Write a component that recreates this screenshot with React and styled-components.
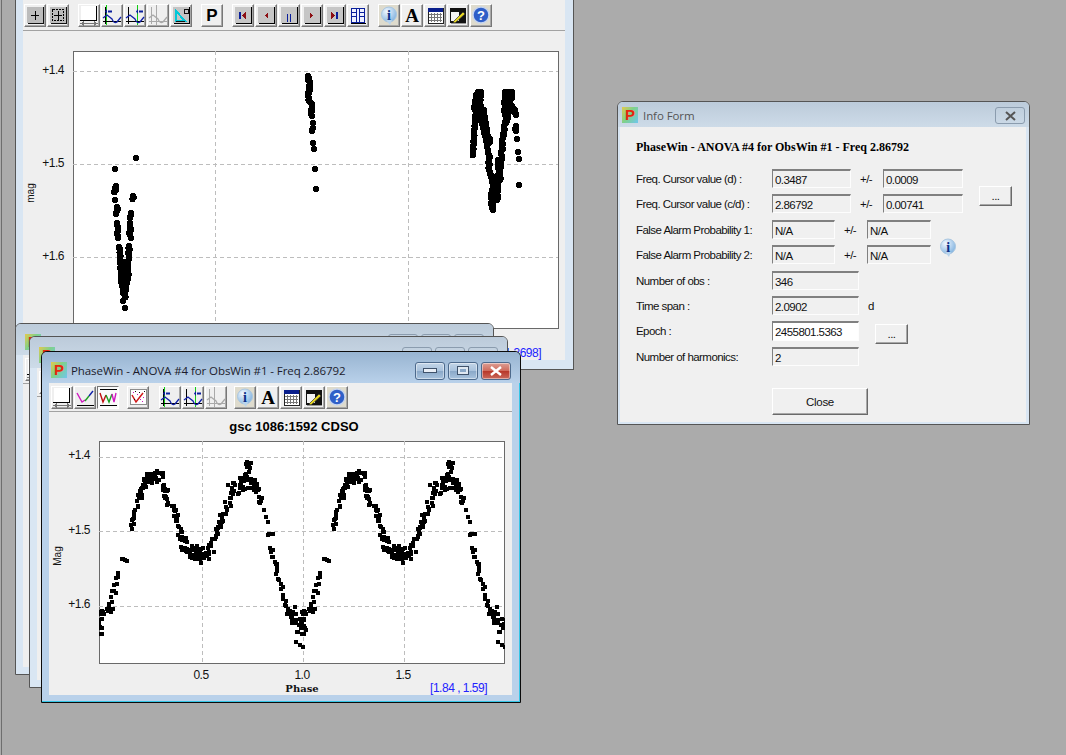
import React from "react";
import styled, { createGlobalStyle } from "styled-components";

const GlobalStyle = createGlobalStyle`
  html, body { margin: 0; padding: 0; background: #ababab; }
  * { box-sizing: border-box; }
`;

const Desktop = styled.div`
  position: relative;
  width: 1066px;
  height: 755px;
  overflow: hidden;
  background: #ababab;
  font-family: "Liberation Sans", Arial, sans-serif;

  &::before {
    content: "";
    position: absolute;
    left: 1px;
    top: 0;
    bottom: 0;
    width: 1px;
    background: #6e6e6e;
  }
`;

const Win = styled.div`
  position: absolute;
  left: ${({ $x }) => $x}px;
  top: ${({ $y }) => $y}px;
  width: ${({ $w }) => $w}px;
  height: ${({ $h }) => $h}px;
  display: flex;
  flex-direction: column;
  border: 1px solid ${({ $active }) => ($active ? "#0b0b0b" : "#555")};
  border-radius: ${({ $flat }) => ($flat ? "0" : "6px 6px 0 0")};
  background: ${({ $active }) => ($active ? "#b9d1ea" : "#d9e6f3")};
  box-shadow: ${({ $active }) => ($active ? "inset -1px -1px 0 #36c6e6" : "none")};
  padding: 0 ${({ $pr }) => $pr ?? 8}px ${({ $pb }) => $pb ?? 7}px ${({ $pl }) => $pl ?? 7}px;
`;

const TitleBar = styled.div`
  flex: none;
  height: ${({ $h }) => $h ?? 31}px;
  margin: 0 -${({ $mr }) => $mr ?? 8}px 0 -${({ $ml }) => $ml ?? 7}px;
  padding: ${({ $pt }) => $pt ?? 10}px ${({ $pr }) => $pr ?? 9}px 0 ${({ $pl }) => $pl ?? 9}px;
  display: flex;
  align-items: flex-start;
  border-radius: 5px 5px 0 0;
  background: ${({ $active }) =>
    $active
      ? "linear-gradient(#98b4d1, #b9d1ea)"
      : "linear-gradient(#bccbda, #cddbe8)"};
`;

const AppIcon = styled.div`
  flex: none;
  width: 16px;
  height: 16px;
  background: linear-gradient(125deg, #e4c94c 0%, #7fd18a 45%, #6fc6ee 100%);
  color: #e8260e;
  font: bold 15px/16px "Liberation Sans", sans-serif;
  text-align: center;
`;

const WinTitle = styled.div`
  margin-left: ${({ $ml }) => $ml ?? 4}px;
  font: 11.5px/17px "Open Sans", sans-serif;
  letter-spacing: -0.08px;
  color: ${({ $color }) => $color ?? "#1c1c2c"};
  white-space: nowrap;
`;

const Captions = styled.div`
  margin-left: auto;
  display: flex;
  gap: 3px;
`;

const CaptionBtn = styled.div`
  width: 30px;
  height: ${({ $h }) => $h ?? 18}px;
  display: flex;
  align-items: center;
  justify-content: center;
  border-radius: 3px;
  border: 1px solid ${({ $active }) => ($active ? "#4d6a8c" : "#8b9cae")};
  background: ${({ $kind, $active }) =>
    !$active
      ? "transparent"
      : $kind === "close"
      ? "linear-gradient(#dc9f95 0%, #cf6b5c 48%, #b8382a 52%, #c96a5c 100%)"
      : "linear-gradient(#c3d5e8 0%, #a9c2dc 48%, #8aa8c8 52%, #a9c3de 100%)"};
  box-shadow: ${({ $active }) => ($active ? "inset 0 0 0 1px rgba(255,255,255,.45)" : "none")};
`;

const Client = styled.div`
  flex: 1;
  min-height: 0;
  display: flex;
  flex-direction: column;
  background: #efefef;
  overflow: hidden;
`;

const Toolbar = styled.div`
  flex: none;
  height: ${({ $h }) => $h}px;
  padding: ${({ $pt }) => $pt}px 0 0 ${({ $pl }) => $pl}px;
  display: flex;
  border-bottom: 1px solid #a2a2a2;
`;

const ToolGroup = styled.div`
  display: flex;
  gap: 1px;
  margin-left: ${({ $ml }) => $ml ?? 9}px;

  &:first-child {
    margin-left: 0;
  }
`;

const ToolBtn = styled.div`
  width: 22px;
  height: 23px;
  border: 1px solid;
  border-color: ${({ $down }) =>
    $down ? "#777 #fff #fff #777" : "#fff #777 #777 #fff"};
  background: ${({ $tint, $down }) => ($tint ? "#dedbcd" : $down ? "#fafafa" : "#efefef")};
  box-shadow: ${({ $down }) => ($down ? "none" : "inset -1px -1px 0 #a8a8a8")};

  svg {
    display: block;
  }
`;

const PBtnText = styled.div`
  font: bold 17px/21px "Liberation Sans", sans-serif;
  text-align: center;
  color: #000;
`;

const Chart = styled.svg`
  display: block;
  flex: none;
`;

const TickText = styled.text`
  font: 12px "Liberation Sans", sans-serif;
  letter-spacing: -0.5px;
  fill: #111;
`;

const AxisName = styled.text`
  font: 10px "Liberation Sans", sans-serif;
  fill: #111;
`;

const SerifAxis = styled.text`
  font: bold 10px "DejaVu Serif", serif;
  fill: #111;
`;

const PlotTitle = styled.text`
  font: bold 13px "Liberation Sans", sans-serif;
  fill: #000;
`;

const CursorText = styled.text`
  font: 12px "Liberation Sans", sans-serif;
  letter-spacing: -0.5px;
  fill: #2222ff;
`;

/* Info form */
const InfoFrame = styled(Client)`
  background: #f0f0f0;
  padding: 13px 0 0 16px;
  color: #111;
  font-size: 11.5px;
  letter-spacing: -0.55px;
`;

const FormHeading = styled.div`
  height: 15px;
  font: bold 12px/15px "Liberation Serif", serif;
  letter-spacing: 0;
  color: #000;
  white-space: nowrap;
  margin-bottom: 14px;
`;

const Block = styled.div`
  display: flex;
  align-items: flex-start;
`;

const Rows = styled.div`
  display: grid;
  grid-auto-rows: 25.4px;
`;

const Row = styled.div`
  display: flex;
  align-items: flex-start;
`;

const Label = styled.div`
  flex: none;
  width: 136px;
  padding-top: 1px;
  line-height: 19px;
  white-space: nowrap;
`;

const Field = styled.div`
  flex: none;
  width: ${({ $w }) => $w}px;
  height: ${({ $tall }) => ($tall ? 20 : 19)}px;
  padding-left: 2px;
  line-height: 18px;
  border-style: solid;
  border-width: 2px 1px 1px 1px;
  border-color: #808080 #fdfdfd #fdfdfd #808080;
  background: ${({ $edit }) => ($edit ? "#fff" : "#f0f0f0")};
`;

const PlusMinus = styled.div`
  flex: none;
  width: 32px;
  padding: 1px 0 0 9px;
  line-height: 19px;
`;

const Unit = styled.div`
  margin-left: 9px;
  line-height: 21px;
`;

const Bevel = styled.div`
  flex: none;
  display: flex;
  align-items: center;
  justify-content: center;
  border: 1px solid;
  border-color: #fff #6a6a6a #6a6a6a #fff;
  box-shadow: inset -1px -1px 0 #a8a8a8;
  background: #f0f0f0;
`;

const DotsBtn = styled(Bevel)`
  width: 33px;
  height: 20px;
  margin-top: ${({ $mt }) => $mt}px;
  margin-left: ${({ $ml }) => $ml}px;
`;

const SideIcon = styled.div`
  flex: none;
  margin-top: 17px;
  margin-left: 7px;
`;

const CloseBtn = styled(Bevel)`
  width: 96px;
  height: 27px;
  margin: 16px 0 0 136px;
  letter-spacing: -0.3px;
`;

const Ink = { blue: "#0a1f9c", red: "#8c0f14", black: "#000", gray: "#a9a9a9" };

const PlusIcon = () => (
  <svg width="20" height="21" shapeRendering="crispEdges">
    <rect x="2" y="2" width="16" height="16" fill="#bcbcbc" />
    <path d="M2.5 18.5H18.5V2" stroke="#111" fill="none" />
    <path d="M6 10.5H14M10.5 6V15" stroke="#000" />
  </svg>
);

const GridIcon = () => (
  <svg width="20" height="21" shapeRendering="crispEdges">
    <rect x="2" y="2" width="16" height="16" fill="#bcbcbc" />
    <path d="M2.5 18.5H18.5V2" stroke="#111" fill="none" />
    <rect x="4.5" y="4.5" width="11" height="11" fill="none" stroke="#000" strokeDasharray="2 1" />
    <path d="M6 10.5H14M10.5 6V15" stroke="#000" />
  </svg>
);

const ZoomXIcon = () => (
  <svg width="20" height="21" shapeRendering="crispEdges">
    <rect x="2" y="1" width="15" height="14" fill="#fff" />
    <path d="M1 15.5H18M17.5 1V15" stroke="#000" />
    <path d="M2 18.5H18" stroke="#777" />
    <path d="M5 16L1 18.5L5 21zM15 16L19 18.5L15 21z" fill="#777" />
  </svg>
);

const CursorIcon = ({ at, off }) => {
  const line = off ? Ink.gray : "#000";
  return (
    <svg width="20" height="21">
      <path d={`M${at}.5 0V20`} stroke={off ? Ink.gray : "#12d012"} shapeRendering="crispEdges" />
      <path d="M3.5 2V19M1 16.5H19" stroke={line} shapeRendering="crispEdges" />
      {!off && <path d={`M${at + 6} 6.5H${at + 2}`} stroke={Ink.blue} strokeWidth="2" />}
      {!off && <path d={`M${at + 1} 4L${at + 1} 9L${at - 2 + 1} 6.5z`} fill={Ink.blue} />}
      <path d="M1 13L5 10L10 14Q12 19 15 17L19 12" stroke={off ? Ink.gray : "#1020a8"} strokeWidth="1.3" fill="none" />
    </svg>
  );
};

const FitIcon = () => (
  <svg width="20" height="21" shapeRendering="crispEdges">
    <rect x="2" y="2" width="16" height="16" fill="#c4c4c4" />
    <path d="M2.5 18.5H18.5V2" stroke="#000" fill="none" />
    <path d="M5 16V6L14 16z" fill="none" stroke="#00c8d8" strokeWidth="2" />
    <path d="M13 4h4v4h-4zM5 16h9" stroke="#111" fill="none" />
  </svg>
);

const MediaIcon = ({ children }) => (
  <svg width="20" height="21" shapeRendering="crispEdges">
    <rect x="2" y="2" width="16" height="16" fill="#c6c6c6" />
    <path d="M2.5 18.5H18.5V2" stroke="#000" fill="none" />
    {children}
  </svg>
);

const First = () => (
  <MediaIcon>
    <path d="M6 7h2v7H6z" fill={Ink.blue} />
    <path d="M13 7v7l-4-3.5z" fill={Ink.red} />
  </MediaIcon>
);
const Prev = () => (
  <MediaIcon>
    <path d="M12 8v5l-3-2.5z" fill={Ink.red} />
  </MediaIcon>
);
const Pause = () => (
  <MediaIcon>
    <path d="M8 9h1v8H8zM11 9h1v8h-1z" fill={Ink.blue} />
  </MediaIcon>
);
const Next = () => (
  <MediaIcon>
    <path d="M8 8v5l3-2.5z" fill={Ink.red} />
  </MediaIcon>
);
const Last = () => (
  <MediaIcon>
    <path d="M6 7v7l4-3.5z" fill={Ink.red} />
    <path d="M11 7h2v7h-2z" fill={Ink.blue} />
  </MediaIcon>
);

const BookIcon = () => (
  <svg width="20" height="21" shapeRendering="crispEdges">
    <path d="M3.5 3.5H16.5V17.5H3.5zM8.5 3.5V17.5M11.5 3.5V17.5" fill="#eef1ff" stroke={Ink.blue} />
    <path d="M4 7.5H8M4 11.5H8M12 7.5H16M12 11.5H16" stroke={Ink.blue} />
    <path d="M3 18.5H18" stroke="#000" />
  </svg>
);

const InfoIcon = () => (
  <svg width="20" height="21">
    <defs>
      <radialGradient id="bub" cx="0.35" cy="0.3" r="0.8">
        <stop offset="0" stopColor="#f2f8ff" />
        <stop offset="1" stopColor="#7aaede" />
      </radialGradient>
    </defs>
    <circle cx="10" cy="9.5" r="7.5" fill="url(#bub)" stroke="#a9c6e0" />
    <path d="M7 15L11 20L13 15z" fill="#b9d4ec" />
    <text x="10" y="15" textAnchor="middle" fontFamily="Liberation Serif" fontWeight="bold" fontSize="14" fill="#0c2f86">i</text>
  </svg>
);

const LetterIcon = () => (
  <svg width="20" height="21">
    <text x="10" y="17" textAnchor="middle" fontFamily="Liberation Serif" fontWeight="bold" fontSize="19" fill="#000">A</text>
  </svg>
);

const TableIcon = () => (
  <svg width="20" height="21" shapeRendering="crispEdges">
    <rect x="3" y="3" width="15" height="15" fill="#fff" stroke="#222" />
    <rect x="3" y="3" width="15" height="4" fill="#0a1f8c" />
    <path d="M6.5 8V17M9.5 8V17M12.5 8V17M15.5 8V17M4 9.5H17M4 12.5H17M4 15.5H17" stroke="#777" />
  </svg>
);

const PenIcon = () => (
  <svg width="20" height="21">
    <rect x="2" y="3" width="16" height="15" fill="#111" />
    <rect x="3" y="7" width="8" height="9" fill="#f4f4f4" />
    <path d="M5 17L15 7L17 9L7 18z" fill="#e8d820" stroke="#333" strokeWidth="0.7" />
    <path d="M3 18.5H18" stroke="#999" />
  </svg>
);

const HelpIcon = () => (
  <svg width="20" height="21">
    <circle cx="10" cy="10" r="8" fill="#2f5fc8" stroke="#c6d4ee" strokeWidth="1.4" />
    <text x="10" y="15" textAnchor="middle" fontFamily="Liberation Sans" fontWeight="bold" fontSize="13" fill="#fff">?</text>
  </svg>
);

const CurveIcon = () => (
  <svg width="20" height="21">
    <path d="M2 18.5H19" stroke="#000" shapeRendering="crispEdges" />
    <path d="M2 6L7 15L10 13" stroke="#d018c0" strokeWidth="1.4" fill="none" />
    <path d="M10 14L14 9" stroke="#1ca020" strokeWidth="1.4" fill="none" />
    <path d="M14 9L18 4" stroke="#1020a8" strokeWidth="1.4" fill="none" />
  </svg>
);

const WaveIcon = () => (
  <svg width="20" height="21">
    <path d="M2 2.5H19M2 18.5H19" stroke="#000" shapeRendering="crispEdges" />
    <path d="M2 6L5 15L8 8" stroke="#c01010" strokeWidth="1.4" fill="none" />
    <path d="M8 8L11 15L14 7" stroke="#1ca020" strokeWidth="1.4" fill="none" />
    <path d="M14 7L16 15L18 6" stroke="#d018c0" strokeWidth="1.4" fill="none" />
  </svg>
);

const ScatterIcon = () => (
  <svg width="20" height="21">
    <rect x="2.5" y="2.5" width="16" height="15" fill="#fff" stroke="#222" strokeDasharray="1 1" />
    <path d="M4 8L8 15L15 6" stroke="#d01818" strokeWidth="1.5" fill="none" />
    <path d="M5 5h1v1H5zM12 12h1v1h-1zM15 10h1v1h-1zM9 7h1v1H9zM14 14h1v1h-1z" fill="#d018c0" />
    <path d="M7 4h1v1H7zM11 5h1v1h-1zM6 12h1v1H6zM16 4h1v1h-1z" fill="#111" />
  </svg>
);

const MainToolbar = () => (
  <Toolbar $h={31} $pt={4} $pl={1}>
    <ToolGroup>
      <ToolBtn><PlusIcon /></ToolBtn>
      <ToolBtn><GridIcon /></ToolBtn>
    </ToolGroup>
    <ToolGroup>
      <ToolBtn><ZoomXIcon /></ToolBtn>
      <ToolBtn><CursorIcon at={4} /></ToolBtn>
      <ToolBtn><CursorIcon at={12} /></ToolBtn>
      <ToolBtn><CursorIcon at={8} off /></ToolBtn>
      <ToolBtn><FitIcon /></ToolBtn>
    </ToolGroup>
    <ToolGroup>
      <ToolBtn><PBtnText>P</PBtnText></ToolBtn>
    </ToolGroup>
    <ToolGroup>
      <ToolBtn><First /></ToolBtn>
      <ToolBtn><Prev /></ToolBtn>
      <ToolBtn><Pause /></ToolBtn>
      <ToolBtn><Next /></ToolBtn>
      <ToolBtn><Last /></ToolBtn>
      <ToolBtn><BookIcon /></ToolBtn>
    </ToolGroup>
    <ToolGroup>
      <ToolBtn $tint><InfoIcon /></ToolBtn>
      <ToolBtn><LetterIcon /></ToolBtn>
      <ToolBtn><TableIcon /></ToolBtn>
      <ToolBtn><PenIcon /></ToolBtn>
      <ToolBtn $tint><HelpIcon /></ToolBtn>
    </ToolGroup>
  </Toolbar>
);

const PhaseToolbar = () => (
  <Toolbar $h={29} $pt={3} $pl={2}>
    <ToolGroup>
      <ToolBtn><ZoomXIcon /></ToolBtn>
      <ToolBtn><CurveIcon /></ToolBtn>
      <ToolBtn $down><WaveIcon /></ToolBtn>
    </ToolGroup>
    <ToolGroup $ml={8}>
      <ToolBtn><ScatterIcon /></ToolBtn>
    </ToolGroup>
    <ToolGroup $ml={10}>
      <ToolBtn><CursorIcon at={4} /></ToolBtn>
      <ToolBtn><CursorIcon at={12} /></ToolBtn>
      <ToolBtn><CursorIcon at={8} off /></ToolBtn>
    </ToolGroup>
    <ToolGroup $ml={7}>
      <ToolBtn $tint><InfoIcon /></ToolBtn>
      <ToolBtn><LetterIcon /></ToolBtn>
      <ToolBtn><TableIcon /></ToolBtn>
      <ToolBtn><PenIcon /></ToolBtn>
      <ToolBtn $tint><HelpIcon /></ToolBtn>
    </ToolGroup>
  </Toolbar>
);

// the windows behind only ever show the first button of their toolbar
const HiddenToolbar = () => (
  <Toolbar $h={29} $pt={3} $pl={2}>
    <ToolGroup>
      <ToolBtn><ZoomXIcon /></ToolBtn>
    </ToolGroup>
  </Toolbar>
);

const CaptionButtons = ({ active }) => (
  <Captions>
    <CaptionBtn $active={active}>
      {active && (
        <svg width="14" height="6"><rect x="0.5" y="0.5" width="13" height="4" fill="#e8eef6" stroke="#3f526b" /></svg>
      )}
    </CaptionBtn>
    <CaptionBtn $active={active}>
      {active && (
        <svg width="12" height="10"><rect x="0.5" y="0.5" width="11" height="8" fill="#dfe8f2" stroke="#3f526b" /><rect x="3" y="3" width="6" height="3" fill="#8aa8c8" /></svg>
      )}
    </CaptionBtn>
    <CaptionBtn $active={active} $kind="close">
      {active && (
        <svg width="14" height="10"><path d="M2 1L12 9M12 1L2 9" stroke="#fff" strokeWidth="2.4" /></svg>
      )}
    </CaptionBtn>
  </Captions>
);

const TITLE = "PhaseWin - ANOVA #4 for ObsWin #1 - Freq 2.86792";

// small seeded generator so the scatter stays put between runs
const seeded = (seed) => () => {
  seed = (seed + 0x6d2b79f5) | 0;
  let t = Math.imul(seed ^ (seed >>> 15), 1 | seed);
  t = (t + Math.imul(t ^ (t >>> 7), 61 | t)) ^ t;
  return ((t ^ (t >>> 14)) >>> 0) / 4294967296;
};

// x0, y0, x1, y1, count, spread - one phase of the light curve in page pixels
const PHASE_TRACK = [
  [101, 636, 102, 612, 10, 3],
  [100, 613, 112, 610, 10, 2.5],
  [108, 611, 115, 590, 7, 2],
  [113, 590, 119, 572, 6, 1.6],
  [122, 559, 127, 561, 4, 0.6],
  [132, 528, 134, 516, 6, 1.4],
  [135, 516, 140, 497, 8, 2],
  [139, 497, 146, 481, 14, 3],
  [146, 478, 161, 476, 26, 5.5],
  [160, 482, 167, 495, 13, 3.5],
  [166, 497, 176, 515, 12, 3],
  [175, 515, 181, 532, 10, 2.4],
  [181, 535, 186, 550, 14, 3.5],
  [186, 549, 205, 558, 42, 6.5],
  [204, 558, 211, 549, 9, 3],
  [210, 550, 217, 530, 14, 3],
  [217, 530, 226, 512, 16, 3.2],
  [226, 510, 231, 490, 10, 3.5],
  [231, 488, 251, 480, 32, 7],
  [247, 475, 249, 461, 10, 2.4],
  [250, 480, 258, 490, 12, 3.5],
  [258, 490, 262, 505, 7, 2.4],
  [264, 510, 268, 522, 3, 1],
  [268, 535, 272, 534, 3, 1],
  [271, 548, 276, 565, 8, 1.8],
  [276, 568, 282, 590, 8, 1.6],
  [282, 595, 290, 613, 9, 1.6],
  [290, 612, 304, 632, 26, 5.5],
  [296, 642, 303, 647, 3, 0.5],
];

const buildPhaseDots = () => {
  const rnd = seeded(1592);
  const dots = [];
  PHASE_TRACK.forEach(([x0, y0, x1, y1, n, s]) => {
    for (let i = 0; i < n; i++) {
      const t = n > 1 ? i / (n - 1) : 0;
      const x = Math.round(x0 + (x1 - x0) * t + (rnd() - 0.5) * 2 * s);
      const y = Math.round(y0 + (y1 - y0) * t + (rnd() - 0.5) * 2 * s);
      dots.push([x, y]);
      dots.push([x + 202, y]);
    }
  });
  return dots;
};

const OBS_RUNS = [
  [[136, 158]],
  [[115, 169]],
  [[116, 186], [115, 192]],
  [[115, 200]],
  [[117, 207], [117, 214]],
  [[117, 223], [118, 238]],
  [[119, 247], [120, 256], [122, 270], [123, 290], [125, 297]],
  [[120, 262], [123, 290]],
  [[123, 262], [126, 290]],
  [[125, 262], [128, 278]],
  [[123, 301]],
  [[125, 308]],
  [[133, 196], [133, 199]],
  [[131, 213], [131, 218]],
  [[130, 223], [130, 235]],
  [[131, 238]],
  [[129, 246], [129, 255], [127, 267], [128, 277], [126, 287]],
  [[308, 76], [310, 86], [308, 100], [311, 104], [311, 111], [312, 116]],
  [[313, 123]],
  [[313, 128], [312, 131]],
  [[313, 143]],
  [[314, 149]],
  [[315, 169]],
  [[316, 189]],
  [[478, 92], [477, 110], [475, 120], [474, 130]],
  [[481, 92], [480, 104], [478, 118]],
  [[476, 95], [475, 110]],
  [[474, 134], [474, 145], [473, 155]],
  [[479, 92], [481, 112], [483, 127], [487, 142], [489, 157], [489, 168], [492, 180], [495, 190], [493, 202], [493, 210]],
  [[484, 110], [486, 127], [490, 142]],
  [[496, 182], [494, 200]],
  [[492, 190], [491, 204]],
  [[498, 184], [497, 200]],
  [[500, 180], [500, 167], [502, 153], [503, 137], [506, 120], [508, 103], [509, 92]],
  [[498, 178], [499, 160]],
  [[512, 92], [510, 104], [513, 108], [517, 115]],
  [[505, 92], [505, 115]],
  [[509, 110], [506, 122]],
  [[516, 126], [516, 131]],
  [[517, 139]],
  [[518, 152]],
  [[519, 159]],
  [[519, 185]],
];

const buildObsDots = () => {
  const rnd = seeded(346);
  const dots = [];
  OBS_RUNS.forEach((run) => {
    dots.push(run[0]);
    for (let i = 1; i < run.length; i++) {
      const [ax, ay] = run[i - 1];
      const [bx, by] = run[i];
      const steps = Math.max(1, Math.round(Math.hypot(bx - ax, by - ay) / 2));
      for (let s = 1; s <= steps; s++) {
        dots.push([
          ax + ((bx - ax) * s) / steps + (rnd() - 0.5) * 1.6,
          ay + ((by - ay) * s) / steps,
        ]);
      }
    }
  });
  return dots;
};

const GridLines = ({ xs, ys, box }) => (
  <g stroke="#bdbdbd" strokeDasharray="4 3" shapeRendering="crispEdges">
    {xs.map((x) => <line key={x} x1={x + 0.5} x2={x + 0.5} y1={box.top} y2={box.bottom} />)}
    {ys.map((y) => <line key={y} x1={box.left} x2={box.right} y1={y + 0.5} y2={y + 0.5} />)}
  </g>
);

const ObsChart = () => {
  const box = { left: 73, top: 51, right: 558, bottom: 328 };
  return (
    <Chart width="542" height="329" viewBox="23 31 542 329">
      <rect x={box.left + 0.5} y={box.top + 0.5} width={box.right - box.left} height={box.bottom - box.top} fill="#fff" stroke="#696969" shapeRendering="crispEdges" />
      <GridLines xs={[215, 408]} ys={[71, 164, 257]} box={box} />
      <g shapeRendering="crispEdges" fill="#000">
        {buildObsDots().map(([x, y], i) => <circle key={i} cx={x} cy={y} r="3.2" />)}
      </g>
      <TickText x="64" y="74" textAnchor="end">+1.4</TickText>
      <TickText x="64" y="167" textAnchor="end">+1.5</TickText>
      <TickText x="64" y="260" textAnchor="end">+1.6</TickText>
      <AxisName transform="translate(34 193) rotate(-90)" textAnchor="middle">mag</AxisName>
      <CursorText x="541" y="357" textAnchor="end">[0.42 , 1.3698]</CursorText>
    </Chart>
  );
};

const PhaseChart = () => {
  const box = { left: 99, top: 441, right: 504, bottom: 663 };
  return (
    <Chart width="463" height="283" viewBox="49 412 463 283">
      <PlotTitle x="294" y="431" textAnchor="middle">gsc 1086:1592 CDSO</PlotTitle>
      <svg x={box.left} y={box.top} width={box.right - box.left + 1} height={box.bottom - box.top + 1} viewBox={`${box.left} ${box.top} ${box.right - box.left + 1} ${box.bottom - box.top + 1}`}>
        <rect x={box.left + 0.5} y={box.top + 0.5} width={box.right - box.left} height={box.bottom - box.top} fill="#fff" stroke="#696969" shapeRendering="crispEdges" />
        <GridLines xs={[202, 303, 404]} ys={[457, 531, 606]} box={box} />
        <g fill="#000" shapeRendering="crispEdges">
          {buildPhaseDots().map(([x, y], i) => <rect key={i} x={x - 2} y={y - 2} width="4" height="4" />)}
        </g>
      </svg>
      <TickText x="90" y="459" textAnchor="end">+1.4</TickText>
      <TickText x="90" y="534" textAnchor="end">+1.5</TickText>
      <TickText x="90" y="608" textAnchor="end">+1.6</TickText>
      <AxisName transform="translate(61 556) rotate(-90)" textAnchor="middle">Mag</AxisName>
      <TickText x="201" y="679" textAnchor="middle">0.5</TickText>
      <TickText x="302" y="679" textAnchor="middle">1.0</TickText>
      <TickText x="403" y="679" textAnchor="middle">1.5</TickText>
      <SerifAxis x="302" y="692" textAnchor="middle">Phase</SerifAxis>
      <CursorText x="487" y="692" textAnchor="end">[1.84 , 1.59]</CursorText>
    </Chart>
  );
};

const PhaseWindow = ({ x, y, active }) => (
  <Win $x={x} $y={y} $w={active ? 480 : 479} $h={352} $active={active}>
    <TitleBar $active={active}>
      <AppIcon>P</AppIcon>
      {active && <WinTitle>{TITLE}</WinTitle>}
      <CaptionButtons active={active} />
    </TitleBar>
    <Client>
      {active ? <PhaseToolbar /> : <HiddenToolbar />}
      {active && <PhaseChart />}
    </Client>
  </Win>
);

const InfoForm = () => (
  <Win $x={617} $y={101} $w={413} $h={324} $pl={2} $pr={3} $pb={2}>
    <TitleBar $h={25} $pt={5} $ml={2} $mr={3} $pl={4} $pr={4}>
      <AppIcon>P</AppIcon>
      <WinTitle $ml={5} $color="#555">Info Form</WinTitle>
      <Captions>
        <CaptionBtn $h={17}>
          <svg width="13" height="10"><path d="M2 1L11 9M11 1L2 9" stroke="#555" strokeWidth="2" /></svg>
        </CaptionBtn>
      </Captions>
    </TitleBar>
    <InfoFrame>
      <FormHeading>{TITLE}</FormHeading>
      <Block>
        <Rows>
          <Row>
            <Label>Freq. Cursor value (d) :</Label>
            <Field $w={79}>0.3487</Field>
            <PlusMinus>+/-</PlusMinus>
            <Field $w={80}>0.0009</Field>
          </Row>
          <Row>
            <Label>Freq. Cursor value (c/d) :</Label>
            <Field $w={79}>2.86792</Field>
            <PlusMinus>+/-</PlusMinus>
            <Field $w={80}>0.00741</Field>
          </Row>
        </Rows>
        <DotsBtn $mt={17} $ml={16}>...</DotsBtn>
      </Block>
      <Block>
        <Rows>
          <Row>
            <Label>False Alarm Probability 1:</Label>
            <Field $w={63}>N/A</Field>
            <PlusMinus>+/-</PlusMinus>
            <Field $w={64}>N/A</Field>
          </Row>
          <Row>
            <Label>False Alarm Probability 2:</Label>
            <Field $w={63}>N/A</Field>
            <PlusMinus>+/-</PlusMinus>
            <Field $w={64}>N/A</Field>
          </Row>
        </Rows>
        <SideIcon><InfoIcon /></SideIcon>
      </Block>
      <Rows>
        <Row>
          <Label>Number of obs :</Label>
          <Field $w={87}>346</Field>
        </Row>
        <Row>
          <Label>Time span :</Label>
          <Field $w={87}>2.0902</Field>
          <Unit>d</Unit>
        </Row>
        <Row>
          <Label>Epoch :</Label>
          <Field $w={87} $tall $edit>2455801.5363</Field>
          <DotsBtn $mt={3} $ml={16}>...</DotsBtn>
        </Row>
        <Row>
          <Label>Number of harmonics:</Label>
          <Field $w={87}>2</Field>
        </Row>
      </Rows>
      <CloseBtn>Close</CloseBtn>
    </InfoFrame>
  </Win>
);

export default function App() {
  return (
    <Desktop>
      <GlobalStyle />
      <Win $x={15} $y={-1} $w={559} $h={371} $flat $pl={7} $pr={8} $pb={9}>
        <Client>
          <MainToolbar />
          <ObsChart />
        </Client>
      </Win>
      <PhaseWindow x={15} y={323} />
      <PhaseWindow x={29} y={336} />
      <PhaseWindow x={41} y={351} active />
      <InfoForm />
    </Desktop>
  );
}
